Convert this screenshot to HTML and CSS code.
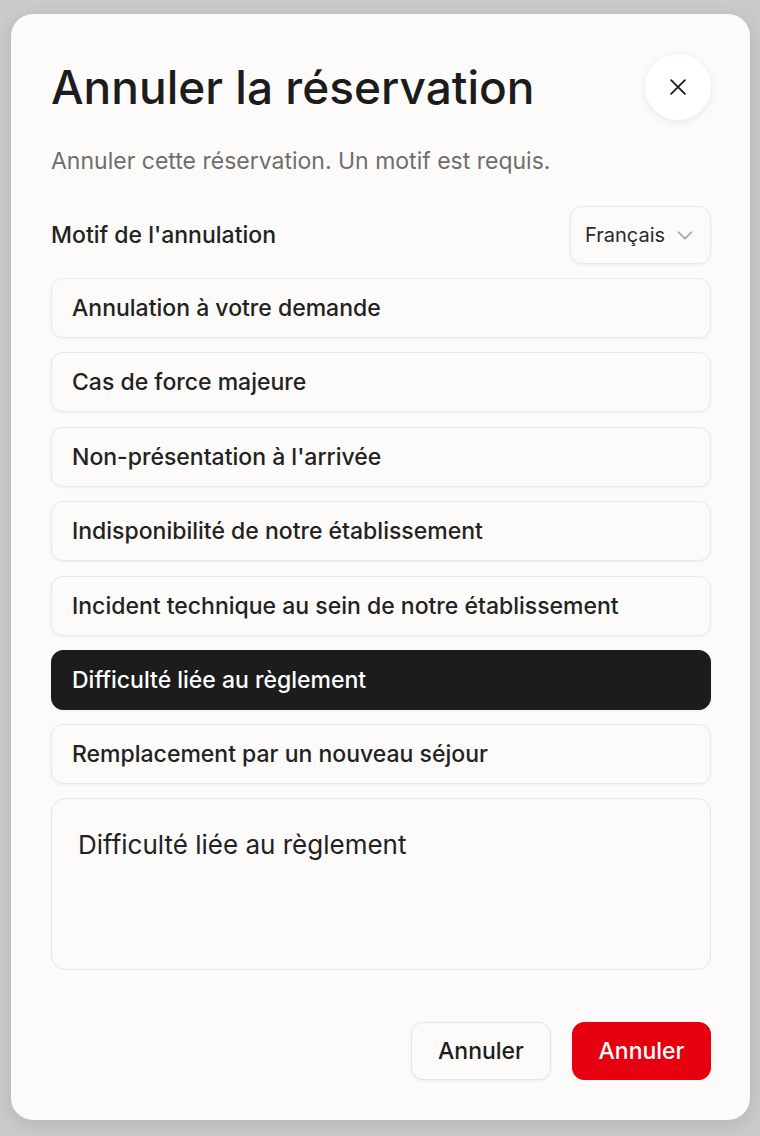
FILE: index.html
```html
<!DOCTYPE html>
<html lang="fr">

<head>
    <meta charset="UTF-8" />
    <meta name="viewport" content="width=device-width, initial-scale=1.0" />
    <title>Annuler la réservation</title>
    <link rel="stylesheet" href="styles.css">
</head>

<body>
    <div class="modal">
        <div class="modal-head">
            <h1>Annuler la réservation</h1>
            <button class="close" type="button" aria-label="Fermer">
                <svg width="22" height="22" viewBox="0 0 24 24" fill="none" stroke="#1c1c1c" stroke-width="2" stroke-linecap="round">
                    <path d="M4.5 4.5 L19.5 19.5 M19.5 4.5 L4.5 19.5" />
                </svg>
            </button>
        </div>
        <p class="subtitle">Annuler cette réservation. Un motif est requis.</p>

        <div class="field-head">
            <span class="label">Motif de l'annulation</span>
            <div class="lang">
                Français
                <svg width="22" height="22" viewBox="0 0 24 24" fill="none" stroke="#a3a3a3" stroke-width="1.8" stroke-linecap="round" stroke-linejoin="round">
                    <path d="M5 9 L12 16 L19 9" />
                </svg>
            </div>
        </div>

        <div class="reasons">
            <div class="reason">Annulation à votre demande</div>
            <div class="reason">Cas de force majeure</div>
            <div class="reason">Non-présentation à l'arrivée</div>
            <div class="reason">Indisponibilité de notre établissement</div>
            <div class="reason">Incident technique au sein de notre établissement</div>
            <div class="reason active">Difficulté liée au règlement</div>
            <div class="reason">Remplacement par un nouveau séjour</div>
        </div>

        <textarea class="note">Difficulté liée au règlement</textarea>

        <div class="actions">
            <button class="btn" type="button">Annuler</button>
            <button class="btn danger" type="button">Annuler</button>
        </div>
    </div>
</body>

</html>
```

FILE: styles.css
```css
/* reset */
* {
    margin: 0;
    padding: 0;
    box-sizing: border-box;
}

body {
    font-family: Inter, "Noto Sans", sans-serif;
    background: #cbcbcb;
    height: 100vh;
    padding: 14px 10px 16px 11px;
}

/* modal */
.modal {
    width: 739px;
    height: 1106px;
    padding: 40px 39px 40px 40px;
    background: #fcfbf9;
    border-radius: 22px;
    box-shadow: 0 4px 20px rgba(0, 0, 0, 0.12);
    display: flex;
    flex-direction: column;
}

.modal-head {
    display: flex;
    align-items: center;
    justify-content: space-between;
    height: 66px;
}

.modal-head h1 {
    font-size: 46px;
    font-weight: 500;
    color: #1c1c1c;
}

.close {
    width: 66px;
    height: 66px;
    border-radius: 50%;
    border: none;
    background: #fff;
    box-shadow: 0 2px 8px rgba(0, 0, 0, 0.08);
    display: flex;
    align-items: center;
    justify-content: center;
    cursor: pointer;
}

.subtitle {
    margin-top: 27px;
    font-size: 23px;
    line-height: 28px;
    color: #6e6e6e;
}

/* field */
.field-head {
    margin-top: 31px;
    display: flex;
    align-items: center;
    justify-content: space-between;
}

.label {
    font-size: 23px;
    font-weight: 500;
    color: #222;
}

.lang {
    height: 58px;
    width: 141px;
    padding: 0 14px;
    display: flex;
    align-items: center;
    justify-content: space-between;
    font-size: 20px;
    color: #2a2a2a;
    background: #fcfbf9;
    border: 1px solid #ebe9e6;
    border-radius: 12px;
    box-shadow: 0 1px 3px rgba(0, 0, 0, 0.06);
}

.reasons {
    margin-top: 14px;
    display: flex;
    flex-direction: column;
    gap: 14.4px;
}

.reason {
    height: 60px;
    padding: 0 20px;
    display: flex;
    align-items: center;
    font-size: 23px;
    font-weight: 500;
    color: #222;
    background: #fcfbf9;
    border: 1px solid #ebe9e6;
    border-radius: 12px;
    box-shadow: 0 1px 3px rgba(0, 0, 0, 0.05);
}

.reason.active {
    background: #1c1c1c;
    border-color: #1c1c1c;
    color: #fff;
}

.note {
    margin-top: 14px;
    height: 172px;
    width: 100%;
    padding: 30px 26px;
    resize: none;
    font-family: Inter, "Noto Sans", sans-serif;
    font-size: 26px;
    color: #222;
    background: #fcfbf9;
    border: 1px solid #e8e6e3;
    border-radius: 14px;
    outline: none;
}

.actions {
    margin-top: auto;
    display: flex;
    justify-content: flex-end;
    gap: 21px;
}

.btn {
    height: 58px;
    width: 140px;
    font-family: Inter, "Noto Sans", sans-serif;
    font-size: 23px;
    font-weight: 500;
    color: #1c1c1c;
    background: #fcfbf9;
    border: 1px solid #e8e6e3;
    border-radius: 12px;
    box-shadow: 0 1px 3px rgba(0, 0, 0, 0.06);
    cursor: pointer;
}

.btn.danger {
    width: 139px;
    background: #e6000f;
    border-color: #e6000f;
    color: #fff;
    box-shadow: none;
}
```
